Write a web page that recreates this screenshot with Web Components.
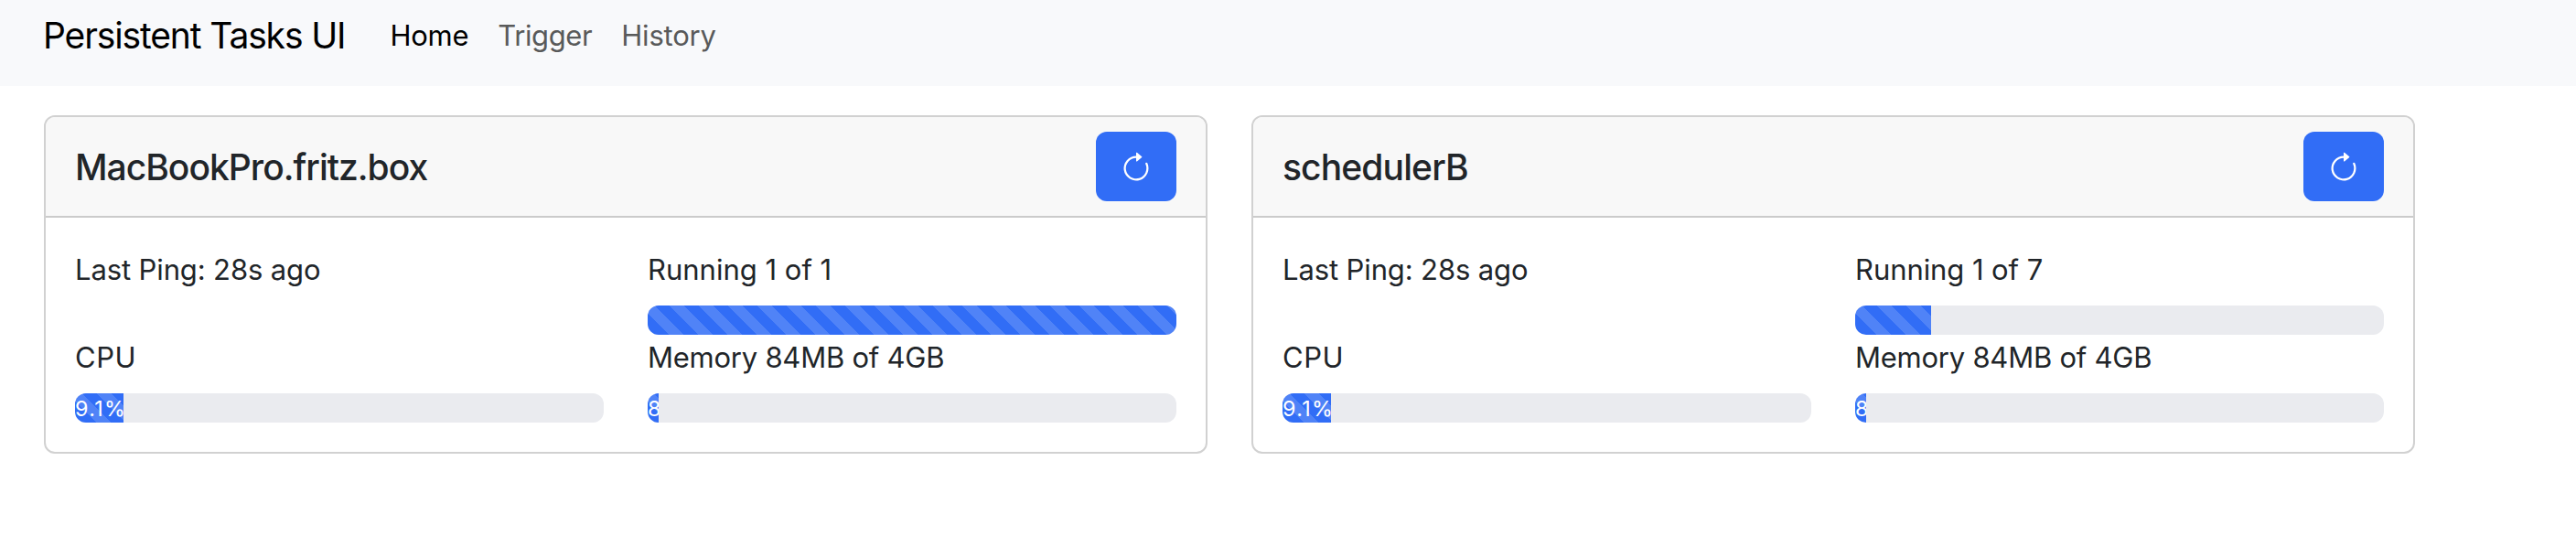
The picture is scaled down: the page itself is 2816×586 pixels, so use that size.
<!DOCTYPE html>
<html lang="en">
<head>
<meta charset="utf-8">
<title>Persistent Tasks UI</title>
<style>
body { margin: 0; background: #fff; color: #212529; font: 31px/48px Inter, "Liberation Sans", sans-serif; }
</style>
</head>
<body>
<task-navbar brand="Persistent Tasks UI">
  <nav-item active style="letter-spacing:-.25px">Home</nav-item>
  <nav-item style="letter-spacing:-.38px">Trigger</nav-item>
  <nav-item style="letter-spacing:-.22px">History</nav-item>
</task-navbar>
<scheduler-grid>
  <scheduler-card name="MacBookPro.fritz.box">
    <stat-cell style="letter-spacing:-.12px">Last Ping: 28s ago</stat-cell>
    <stat-cell>Running 1 of 1<progress-bar slot="bar" value="100"></progress-bar></stat-cell>
    <stat-cell style="letter-spacing:.5px">CPU<progress-bar slot="bar" value="9.1">9.1%</progress-bar></stat-cell>
    <stat-cell style="letter-spacing:-.24px">Memory 84MB of 4GB<progress-bar slot="bar" value="2.1">8</progress-bar></stat-cell>
  </scheduler-card>
  <scheduler-card name="schedulerB">
    <stat-cell style="letter-spacing:-.12px">Last Ping: 28s ago</stat-cell>
    <stat-cell style="letter-spacing:-.07px">Running 1 of 7<progress-bar slot="bar" value="14.3"></progress-bar></stat-cell>
    <stat-cell style="letter-spacing:.5px">CPU<progress-bar slot="bar" value="9.1">9.1%</progress-bar></stat-cell>
    <stat-cell style="letter-spacing:-.24px">Memory 84MB of 4GB<progress-bar slot="bar" value="2.1">8</progress-bar></stat-cell>
  </scheduler-card>
</scheduler-grid>
<script>
const define = (name, render) => customElements.define(name, class extends HTMLElement {
  connectedCallback() {
    if (!this.shadowRoot) this.attachShadow({ mode: 'open' }).innerHTML = render(this);
  }
});

define('task-navbar', el => `
<style>
:host { display: flex; align-items: flex-start; box-sizing: border-box; height: 94px; padding: 9px 47px 0; background: #f8f9fb; }
.brand { font-size: 39px; line-height: 60px; letter-spacing: -1.13px; color: #000; margin-right: 33px; white-space: nowrap; }
nav { display: flex; padding-top: 6px; }
</style>
<div class="brand">${el.getAttribute('brand')}</div>
<nav><slot></slot></nav>`);

define('nav-item', () => `
<style>
:host { display: block; padding: 0 16px; color: #595a5a; white-space: nowrap; }
:host([active]) { color: #000; }
</style>
<slot></slot>`);

define('scheduler-grid', () => `
<style>
:host { display: grid; grid-template-columns: 1272px 1272px; gap: 48px; padding: 32px 48px; }
</style>
<slot></slot>`);

define('refresh-button', () => `
<style>
:host { display: block; }
button { display: flex; align-items: center; justify-content: center; width: 88px; height: 76px; padding: 4px 0 0; border: 0; border-radius: 12px; background: #316df6; color: #fff; }
svg { display: block; }
</style>
<button aria-label="Refresh"><svg width="36" height="36" viewBox="0 0 16 16" fill="currentColor"><path fill-rule="evenodd" d="M8 3a5 5 0 1 0 4.546 2.914.5.5 0 0 1 .908-.417A6 6 0 1 1 8 2z"/><path d="M8 4.466V.534a.25.25 0 0 1 .41-.192l2.36 1.966c.12.1.12.284 0 .384L8.41 4.658A.25.25 0 0 1 8 4.466"/></svg></button>`);

define('scheduler-card', el => `
<style>
:host { display: block; border: 2px solid #d1d1d1; border-radius: 12px; overflow: hidden; background: #fff; }
header { display: flex; align-items: center; justify-content: space-between; padding: 16px 32px; background: #f8f8f8; border-bottom: 2px solid #cbcbcb; }
h5 { margin: 0; padding-top: 1px; font-size: 39px; font-weight: 500; line-height: 48px; letter-spacing: ${el.getAttribute('name').length > 12 ? -1 : -.88}px; }
.body { display: grid; grid-template-columns: 1fr 1fr; column-gap: 48px; padding: 32px; }
</style>
<header><h5>${el.getAttribute('name')}</h5><refresh-button></refresh-button></header>
<div class="body"><slot></slot></div>`);

define('stat-cell', () => `
<style>
:host { display: block; }
.label { height: 48px; padding-top: 1px; margin-bottom: 15px; white-space: nowrap; }
</style>
<div class="label"><slot></slot></div>
<slot name="bar"></slot>`);

define('progress-bar', el => `
<style>
:host { display: flex; height: 32px; border-radius: 12px; overflow: hidden; background: #eaebef; }
.fill { width: ${el.getAttribute('value')}%; overflow: hidden; white-space: nowrap; color: #fff;
  font-size: 23.3px; line-height: 33px; letter-spacing: 1.3px;
  background: linear-gradient(45deg, rgba(255,255,255,.15) 25%, transparent 25%, transparent 50%, rgba(255,255,255,.15) 50%, rgba(255,255,255,.15) 75%, transparent 75%, transparent) 23px 0 / 32px 32px #316df6; }
</style>
<div class="fill"><slot></slot></div>`);
</script>
</body>
</html>
